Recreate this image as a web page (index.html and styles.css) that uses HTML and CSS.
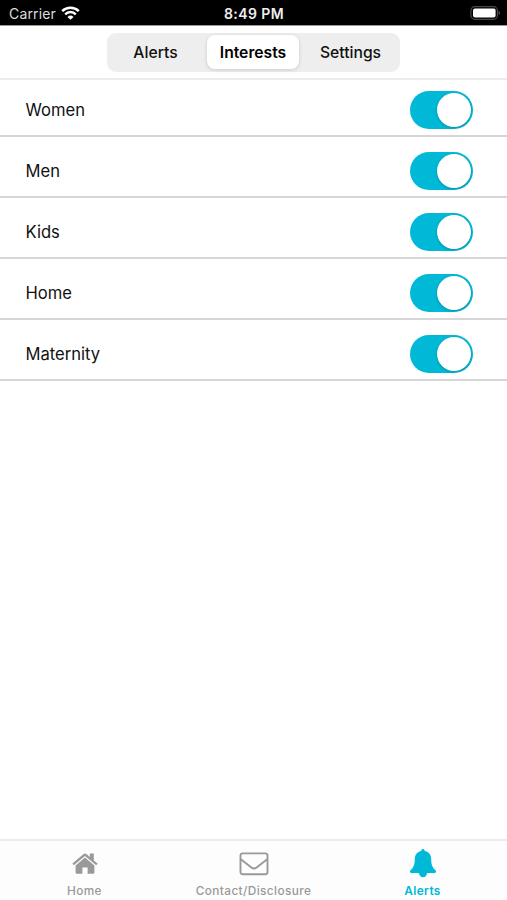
FILE: index.html
```html
<!DOCTYPE html>
<html lang="en">
<head>
<meta charset="utf-8">
<title>Interests</title>
<link rel="stylesheet" href="styles.css">
</head>
<body>
<div class="app">
  <div class="status">
    <div class="carrier"><span>Carrier</span>
      <svg class="wifi" width="19" height="14" viewBox="0 0 19 14" fill="none" stroke="#fff" stroke-width="2.5"><path d="M1.2 5.1a11.8 11.8 0 0 1 16.6 0M4.2 8.3a7.5 7.5 0 0 1 10.6 0"/><path d="M9.5 13.8 6.5 10.9a4.3 4.3 0 0 1 6 0z" fill="#fff" stroke="none"/></svg>
    </div>
    <span class="time">8:49 PM</span>
    <svg class="battery" width="31" height="14" viewBox="0 0 31 14"><rect x=".9" y=".7" width="26.5" height="12.6" rx="3.8" fill="#000" stroke="#484848" stroke-width="1.2"/><rect x="3" y="2.4" width="22.6" height="9.2" rx="2" fill="#fff"/><path d="M28.6 4.8q3 2.2 0 4.4z" fill="#555"/></svg>
  </div>
  <header class="header">
    <nav class="segments">
      <span class="segment"><span>Alerts</span></span>
      <span class="segment selected"><span>Interests</span></span>
      <span class="segment last"><span>Settings</span></span>
    </nav>
  </header>
  <main class="list">
    <div class="row"><span>Women</span><i class="toggle"></i></div>
    <div class="row"><span>Men</span><i class="toggle"></i></div>
    <div class="row"><span>Kids</span><i class="toggle"></i></div>
    <div class="row"><span>Home</span><i class="toggle"></i></div>
    <div class="row"><span>Maternity</span><i class="toggle"></i></div>
  </main>
  <footer class="tabs">
    <div class="tab">
      <svg width="26" height="30" viewBox="0 0 26 30" fill="#999"><path d="M13 9.6 22.4 17.5V24.6q0 1.2-1.2 1.2h-5.6V19.6h-5.2v6.2H4.8q-1.2 0-1.2-1.2v-7.1z"/><path d="M.4 15.6 11.6 6q1.4-1.1 2.8 0l3.4 2.9V5.6h4v6.8l3.8 3.2-1.4 1.6L13 7.9 1.8 17.2z"/></svg>
      <span>Home</span>
    </div>
    <div class="tab">
      <svg width="30" height="30" viewBox="0 0 30 30" fill="none" stroke="#999" stroke-width="1.9"><rect x="1.5" y="5.4" width="27" height="20.9" rx="2.2"/><path d="M1.8 11.2 12.4 19.4q2.6 2 5.2 0L28.2 11.2"/></svg>
      <span class="contact">Contact/Disclosure</span>
    </div>
    <div class="tab active">
      <svg class="bell" width="26" height="30" viewBox="0 0 26 30" fill="#00b9d6"><path d="M13 1c1 0 1.6.7 1.6 1.6v.4c4.2.7 6.6 3.8 6.6 8.2 0 5.9 1.6 8.7 4.4 11.1.8.8.4 2.8-1.1 2.8H1.5c-1.5 0-1.9-2-1.1-2.8 2.8-2.4 4.4-5.2 4.4-11.1 0-4.4 2.4-7.5 6.6-8.2v-.4C11.4 1.7 12 1 13 1z"/><path d="M9 25h8c0 2.6-1.8 4.2-4 4.2s-4-1.6-4-4.2z"/></svg>
      <span>Alerts</span>
    </div>
  </footer>
</div>
</body>
</html>
```
FILE: styles.css
```css
* { box-sizing: border-box; }
body { margin: 0; background: #fff; font-family: Inter, "Liberation Sans", sans-serif; color: #111; }
.app { width: 507px; height: 900px; display: flex; flex-direction: column; overflow: hidden; }
.status { height: 25px; flex: none; background: #000; color: #fff; display: grid; grid-template-columns: 1fr auto 1fr; align-items: center; padding: 2px 6px 0 9px; font-size: 14px; }
.carrier { display: flex; align-items: center; gap: 5px; color: #ddd; letter-spacing: .15px; }
.wifi { margin-top: -2px; }
.time { font-weight: 600; font-size: 14px; letter-spacing: .4px; color: #eee; margin-left: -2px; }
.battery { justify-self: end; margin-top: -1px; }
.header { height: 55px; flex: none; padding-top: 8px; border-top: 1px solid #999; border-bottom: 2px solid #ececec; display: flex; justify-content: center; align-items: flex-start; }
.segments { width: 293px; height: 39px; margin-top: -1px; padding: 2px 3px 3px; border-radius: 9px; background: #eee; display: grid; grid-template-columns: 97px 92px 1fr; font-size: 15.7px; font-weight: 500; }
.segment { display: flex; align-items: center; justify-content: center; border-radius: 8px; padding-right: 6px; }
.segment.last { padding: 0 0 0 5px; }
.selected { background: #fff; font-weight: 600; box-shadow: 0 1px 4px rgba(0, 0, 0, .14); color: #000; padding: 0; }
.list { flex: 1; }
.row { height: 61.1px; padding: 8px 34px 0 25.5px; border-bottom: 2px solid #d6d6d6; display: flex; align-items: center; justify-content: space-between; font-size: 16.6px; }
.row:first-child { height: 57px; padding-top: 5px; }
.toggle { width: 63px; height: 38px; border-radius: 19px; background: #00b9d6; padding: 2px; display: flex; justify-content: flex-end; }
.toggle::before { content: ""; width: 34px; height: 34px; border-radius: 50%; background: #fff; box-shadow: 0 1px 3px rgba(0, 0, 0, .22); }
.tabs { height: 61px; flex: none; border-top: 2px solid #ebebeb; background: #fdfdfd; display: grid; grid-template-columns: repeat(3, 1fr); }
.tab { display: flex; flex-direction: column; align-items: center; padding-top: 7px; color: #999; font-size: 11.8px; font-weight: 500; letter-spacing: .4px; }
.tab span { line-height: 16px; margin-top: 5px; }
.active { color: #00b9d6; font-weight: 600; }
```
